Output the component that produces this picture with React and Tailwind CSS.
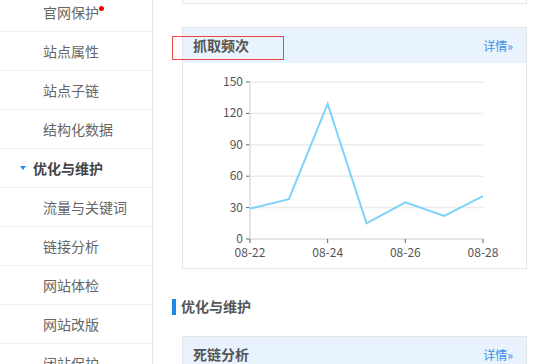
const sideItems = [
  { label: "官网保护", dot: true },
  { label: "站点属性" },
  { label: "站点子链" },
  { label: "结构化数据" },
  { label: "优化与维护", group: true },
  { label: "流量与关键词" },
  { label: "链接分析" },
  { label: "网站体检" },
  { label: "网站改版" },
  { label: "闭站保护" },
];

const crawl = [29, 38, 129, 15, 35, 22, 41];

function CrawlChart() {
  const x0 = 67;
  const x1 = 300;
  const y0 = 176;
  const yTop = 19;
  const step = (x1 - x0) / (crawl.length - 1);
  const ys = (v) => y0 - ((y0 - yTop) * v) / 150;
  const pts = crawl.map((v, i) => `${x0 + i * step},${ys(v)}`).join(" ");
  return (
    <svg width="344" height="205" className="block">
      {[0, 30, 60, 90, 120, 150].map((v) => (
        <g key={v}>
          {v > 0 && (
            <line x1={x0} x2={x1} y1={ys(v)} y2={ys(v)} stroke="#ececec" strokeWidth="1.5" />
          )}
          <line x1={x0 - 4} x2={x0} y1={ys(v)} y2={ys(v)} stroke="#666" />
          <text x={x0 - 7} y={ys(v) + 4} textAnchor="end" fontSize="12" fill="#555">
            {v}
          </text>
        </g>
      ))}
      <line x1={x0} x2={x0} y1={yTop} y2={y0} stroke="#ddd" strokeWidth="1.5" />
      <line x1={x0} x2={x1} y1={y0} y2={y0} stroke="#ddd" strokeWidth="1.5" />
      {["08-22", "08-24", "08-26", "08-28"].map((d, i) => (
        <g key={d}>
          <line x1={x0 + i * 2 * step} x2={x0 + i * 2 * step} y1={y0} y2={y0 + 4} stroke="#666" />
          <text x={x0 + i * 2 * step} y={y0 + 18} textAnchor="middle" fontSize="12" fill="#555">
            {d}
          </text>
        </g>
      ))}
      <polyline points={pts} fill="none" stroke="#7dd3fc" strokeWidth="2" />
    </svg>
  );
}

function CardHeader({ title }) {
  return (
    <div className="flex h-[35px] items-center justify-between bg-[#e8f3fd] pl-[10px] pr-[13px]">
      <span className="text-[14px] font-bold text-[#555]">{title}</span>
      <span className="text-[12px] text-[#3b8ee8]">详情»</span>
    </div>
  );
}

export default function App() {
  return (
    <div
      className="flex h-[364px] w-[554px] overflow-hidden bg-white"
      style={{ fontFamily: '"Noto Sans CJK SC", "Noto Sans", sans-serif' }}
    >
      <div className="-mt-[7px] w-[153px] shrink-0 border-r border-[#e8e8e8]">
        {sideItems.map((it) =>
          it.group ? (
            <div
              key={it.label}
              className="flex h-[39px] items-center border-b border-[#efefef] pl-[20px]"
            >
              <span className="mr-[7px] h-0 w-0 border-x-[3px] border-t-[4px] border-x-transparent border-t-[#2b8ae6]" />
              <span className="text-[14px] font-bold text-[#444]">{it.label}</span>
            </div>
          ) : (
            <div
              key={it.label}
              className="flex h-[39px] items-center border-b border-[#efefef] pl-[43px]"
            >
              <span className="relative text-[14px] text-[#666]">
                {it.label}
                {it.dot && (
                  <span className="absolute -right-[5px] top-[4px] h-[5px] w-[5px] rounded-full bg-[#f00]" />
                )}
              </span>
            </div>
          )
        )}
      </div>
      <div className="flex-1 pl-[19px]">
        <div className="ml-[10px] h-[4px] w-[345px] border-x border-b border-[#e5e5e5]" />
        <div className="relative ml-[10px] mt-[23px] w-[345px] border border-[#e5e5e5]">
          <CardHeader title="抓取频次" />
          <div className="absolute left-[-11px] top-[8px] h-[24px] w-[112px] border border-[#ef4444]" />
          <CrawlChart />
        </div>
        <div className="mt-[27px] flex items-center">
          <span className="mr-[5px] h-[16px] w-[4px] bg-[#1e88e5]" />
          <span className="text-[14px] font-bold text-[#555]">优化与维护</span>
        </div>
        <div className="ml-[10px] mt-[19px] w-[345px] border border-[#e5e5e5]">
          <CardHeader title="死链分析" />
        </div>
      </div>
    </div>
  );
}
